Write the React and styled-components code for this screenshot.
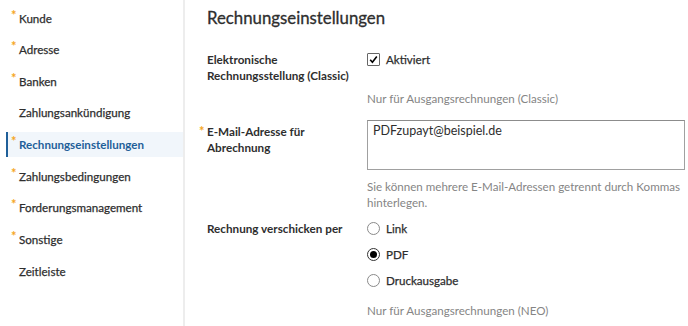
import React from "react";
import styled, { createGlobalStyle } from "styled-components";

const Global = createGlobalStyle`
  html, body { margin: 0; padding: 0; background: #fff; }
  body { font-family: Lato, "Open Sans", sans-serif; color: #2e2e2e; }
  * { box-sizing: border-box; }
`;

const Page = styled.div`
  display: flex;
  width: 688px;
  height: 326px;
  overflow: hidden;
`;

const Sidebar = styled.nav`
  width: 185px;
  flex: none;
  border-right: 2px solid #ededed;
  padding-top: 5.5px;
  display: flex;
  flex-direction: column;
  gap: 6.65px;
`;

const NavItem = styled.div`
  position: relative;
  height: 25px;
  margin-left: 6px;
  padding-left: 11px;
  border-left: 2px solid ${(p) => (p.$active ? "#1f5f99" : "transparent")};
  background: ${(p) => (p.$active ? "#f1f6fb" : "transparent")};
  display: flex;
  align-items: center;
  font-size: 11.6px;
  font-weight: ${(p) => (p.$active ? 700 : 400)};
  color: ${(p) => (p.$active ? "#1f5f99" : "#2e2e2e")};
  -webkit-text-stroke: ${(p) => (p.$active ? "0" : "0.25px")};
  white-space: nowrap;
`;

const Star = styled.span`
  position: absolute;
  left: ${(p) => p.$left}px;
  top: ${(p) => p.$top}px;
  font-size: 13px;
  line-height: 13px;
  color: #f5a623;
  font-weight: 700;
  -webkit-text-stroke: 0;
`;

const Main = styled.main`
  flex: 1;
  padding: 7px 3px 0 22px;
`;

const Title = styled.h1`
  margin: 0 0 22px;
  font-size: 16.8px;
  line-height: 22px;
  font-weight: 400;
  color: #2e2e2e;
  -webkit-text-stroke: 0.3px;
`;

const Row = styled.div`
  display: grid;
  grid-template-columns: 160px 1fr;
  margin-bottom: ${(p) => p.$mb || 0}px;
`;

const Label = styled.div`
  position: relative;
  font-size: 11.7px;
  line-height: 16px;
  font-weight: 700;
  color: #2e2e2e;
  padding-top: ${(p) => p.$pt || 0}px;
`;

const Value = styled.div`
  display: flex;
  flex-direction: column;
`;

const OptionLine = styled.label`
  display: flex;
  align-items: center;
  gap: 6px;
  height: 16px;
  font-size: 11.6px;
  font-weight: 400;
  color: #2e2e2e;
  -webkit-text-stroke: 0.25px;
  margin-bottom: ${(p) => p.$mb || 0}px;
`;

const CheckBox = styled.span`
  width: 13px;
  height: 13px;
  border: 1px solid #666;
  border-radius: 1px;
  display: flex;
  align-items: center;
  justify-content: center;
  background: #fff;
`;

const Radio = styled.span`
  width: 13px;
  height: 13px;
  border-radius: 50%;
  border: 1px solid ${(p) => (p.$checked ? "#333" : "#8a8a8a")};
  display: flex;
  align-items: center;
  justify-content: center;
  background: #fff;
  &::after {
    content: "";
    width: 7px;
    height: 7px;
    border-radius: 50%;
    background: ${(p) => (p.$checked ? "#000" : "transparent")};
  }
`;

const Help = styled.div`
  font-size: 11.6px;
  line-height: 16px;
  color: #858585;
  margin-top: ${(p) => p.$mt || 0}px;
  white-space: nowrap;
`;

const TextArea = styled.div`
  height: 50px;
  border: 1px solid #a0a0a0;
  border-top-color: #8c8c8c;
  padding: 2px 5px;
  font-size: 12.5px;
  line-height: 16px;
  color: #2e2e2e;
`;

const nav = [
  { t: "Kunde", s: true },
  { t: "Adresse", s: true },
  { t: "Banken", s: true },
  { t: "Zahlungsankündigung" },
  { t: "Rechnungseinstellungen", s: true, a: true },
  { t: "Zahlungsbedingungen", s: true },
  { t: "Forderungsmanagement", s: true },
  { t: "Sonstige", s: true },
  { t: "Zeitleiste" },
];

export default function App() {
  return (
    <>
      <Global />
      <Page>
        <Sidebar>
          {nav.map((n) => (
            <NavItem key={n.t} $active={n.a}>
              {n.s && <Star $left={3} $top={3}>*</Star>}
              {n.t}
            </NavItem>
          ))}
        </Sidebar>
        <Main>
          <Title>Rechnungseinstellungen</Title>
          <Row $mb={13}>
            <Label>
              Elektronische
              <br />
              Rechnungsstellung (Classic)
            </Label>
            <Value>
              <OptionLine>
                <CheckBox>
                  <svg width="9" height="9" viewBox="0 0 9 9">
                    <path d="M1.2 4.8 L3.4 7.2 L7.8 1.4" fill="none" stroke="#000" strokeWidth="1.6" />
                  </svg>
                </CheckBox>
                Aktiviert
              </OptionLine>
              <Help $mt={24}>Nur für Ausgangsrechnungen (Classic)</Help>
            </Value>
          </Row>
          <Row $mb={9}>
            <Label $pt={3}>
              <Star $left={-8} $top={5}>*</Star>
              E-Mail-Adresse für
              <br />
              Abrechnung
            </Label>
            <Value>
              <TextArea>PDFzupayt@beispiel.de</TextArea>
              <Help $mt={9}>
                Sie können mehrere E-Mail-Adressen getrennt durch Kommas
                <br />
                hinterlegen.
              </Help>
            </Value>
          </Row>
          <Row>
            <Label>Rechnung verschicken per</Label>
            <Value>
              <OptionLine $mb={10}>
                <Radio />
                Link
              </OptionLine>
              <OptionLine $mb={10}>
                <Radio $checked />
                PDF
              </OptionLine>
              <OptionLine>
                <Radio />
                Druckausgabe
              </OptionLine>
              <Help $mt={15}>Nur für Ausgangsrechnungen (NEO)</Help>
            </Value>
          </Row>
        </Main>
      </Page>
    </>
  );
}
